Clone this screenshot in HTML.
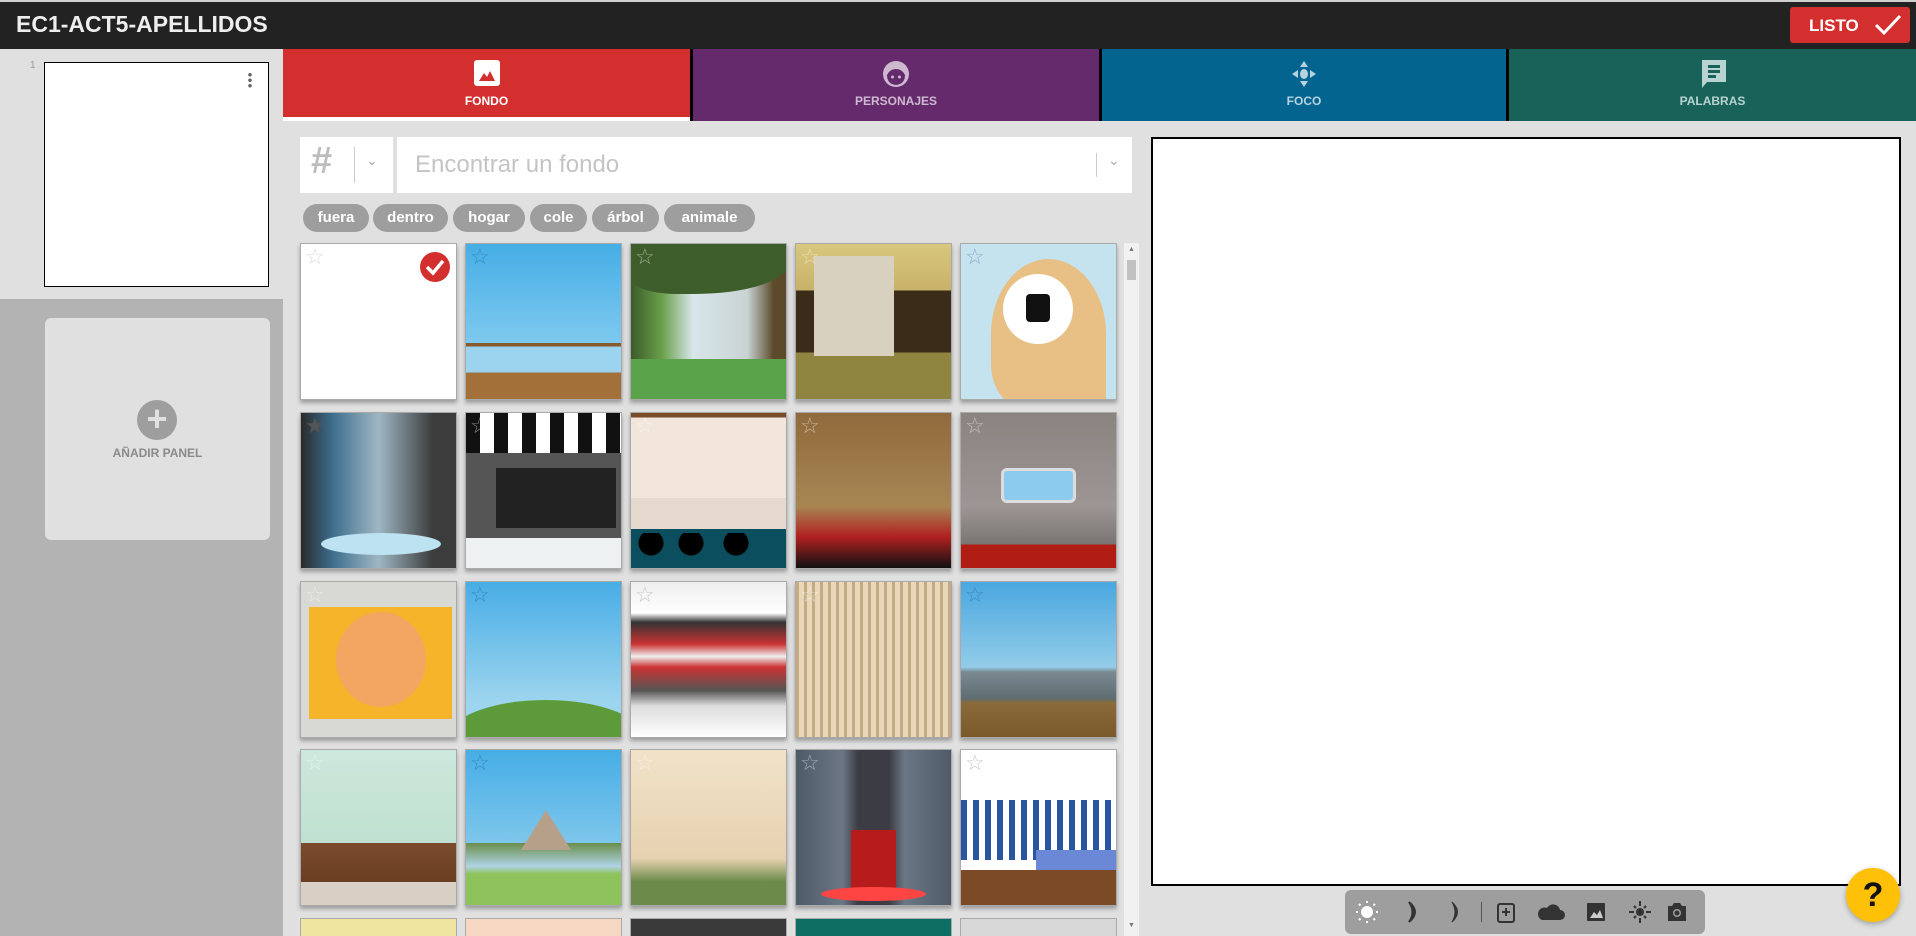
<!DOCTYPE html>
<html style="overflow:hidden;height:936px"><head><meta charset="utf-8"><style>
*{box-sizing:border-box;margin:0;padding:0}
html,body{width:1916px;height:936px;overflow:hidden}
body{background:#e0e0e0;font-family:"Liberation Sans",sans-serif}
#w{position:relative;width:1916px;height:936px;overflow:hidden}
.a{position:absolute}
.hdr{left:0;top:0;width:1916px;height:49px;background:#222;border-top:2px solid #cfcfcf}
.title{left:16px;top:11px;color:#eee;font-size:23px;font-weight:bold;letter-spacing:0}
.listo{left:1790px;top:7px;width:120px;height:36px;background:#d32f2f;border-radius:3px;color:#fff;font-weight:bold;font-size:17px;padding:9px 0 0 19px}
.tab{top:49px;height:72px;text-align:center;font-size:12px;font-weight:bold}
.tab .l{position:absolute;left:0;right:0;top:45px}
.tile{width:157px;height:157px;border:1px solid #aaa;box-shadow:0 3px 4px rgba(0,0,0,.3);overflow:hidden}
.tile .s{position:absolute;left:4px;top:0px;font-size:22px;color:rgba(255,255,255,.45);line-height:26px}
.t5{height:18px;border-bottom:none;box-shadow:none}
.chip{top:204px;height:28px;background:#9e9e9e;border-radius:14px;color:#fff;font-weight:bold;font-size:15px;text-align:center;line-height:28px}
</style></head><body><div id="w">
<div class="a hdr"></div>
<div class="a title">EC1-ACT5-APELLIDOS</div>
<div class="a listo">LISTO <svg width="28" height="22" viewBox="0 0 28 22" style="position:absolute;left:84px;top:7px"><path d="M2 11 L10 19 L26 2" stroke="#fff" stroke-width="3" fill="none"/></svg></div>

<div class="a" style="left:0;top:49px;width:283px;height:250px;background:#e0e0e0"></div>
<div class="a" style="left:0;top:299px;width:283px;height:637px;background:#b3b3b3"></div>
<div class="a" style="left:30px;top:60px;font-size:10px;color:#999">1</div>
<div class="a" style="left:44px;top:62px;width:225px;height:225px;background:#fff;border:1px solid #000"></div>
<div class="a" style="left:248px;top:72px;width:4px;height:16px;background:radial-gradient(circle,#666 1.6px,transparent 2px) 0 0/4px 5.5px"></div>
<div class="a" style="left:45px;top:318px;width:225px;height:222px;background:#e0e0e0;border-radius:6px"></div>
<div class="a" style="left:137px;top:400px;width:40px;height:40px;border-radius:50%;background:#9e9e9e;color:#e0e0e0;font-size:36px;line-height:38px;text-align:center;font-weight:bold">+</div>
<div class="a" style="left:45px;top:446px;width:225px;text-align:center;color:#8a8a8a;font-size:12px;font-weight:bold">AÑADIR PANEL</div>

<div class="a" style="left:283px;top:49px;width:1633px;height:72px;background:#000"></div>
<div class="a tab" style="left:283px;width:407px;background:#d32f2f;color:#fff">
<svg class="a" style="left:190px;top:10px" width="28" height="28" viewBox="0 0 28 28"><rect x="1" y="1" width="26" height="26" rx="3" fill="#fff"/><path d="M6 22 L11 14 L14 18 L17 12 L22 22Z" fill="#d32f2f"/></svg>
<div class="l">FONDO</div></div>
<div class="a" style="left:283px;top:117px;width:407px;height:4px;background:#fff"></div>
<div class="a tab" style="left:693px;width:406px;background:#652a6c;color:#cdb9d0">
<svg class="a" style="left:188px;top:10px" width="30" height="30" viewBox="0 0 30 30"><circle cx="15" cy="15" r="13" fill="#cdb9d0"/><path d="M6 16 Q9 10 15 10 Q21 10 24 16 Q24 25 15 26 Q6 25 6 16Z" fill="#652a6c"/><circle cx="11.5" cy="18" r="1.5" fill="#cdb9d0"/><circle cx="18.5" cy="18" r="1.5" fill="#cdb9d0"/></svg>
<div class="l">PERSONAJES</div></div>
<div class="a tab" style="left:1102px;width:404px;background:#02648f;color:#b7d3e0">
<svg class="a" style="left:188px;top:10px" width="28" height="30" viewBox="0 0 28 30"><path d="M14 2 L18 8 H10Z M14 28 L18 22 H10Z M2 15 L8 11 V19Z M26 15 L20 11 V19Z" fill="#b7d3e0"/><ellipse cx="14" cy="15" rx="4" ry="5" fill="#b7d3e0"/></svg>
<div class="l">FOCO</div></div>
<div class="a tab" style="left:1509px;width:407px;background:#18625a;color:#b9d4d0">
<svg class="a" style="left:190px;top:9px" width="30" height="32" viewBox="0 0 30 32"><path d="M3 2 H27 V24 H8 L3 30Z" fill="#b9d4d0"/><rect x="9" y="7" width="12" height="3" fill="#18625a"/><rect x="9" y="12" width="12" height="3" fill="#18625a"/><rect x="9" y="17" width="8" height="3" fill="#18625a"/></svg>
<div class="l">PALABRAS</div></div>

<div class="a" style="left:300px;top:137px;width:93px;height:56px;background:#fff"></div>
<div class="a" style="left:311px;top:140px;font-size:38px;color:#bdbdbd;font-weight:bold">#</div>
<div class="a" style="left:354px;top:147px;width:1px;height:36px;background:#ccc"></div>
<div class="a" style="left:366px;top:152px;font-size:14px;color:#aaa">⌄</div>
<div class="a" style="left:397px;top:137px;width:735px;height:56px;background:#fff"></div>
<div class="a" style="left:415px;top:151px;font-size:24px;color:#c4c4c4">Encontrar un fondo</div>
<div class="a" style="left:1096px;top:153px;width:1px;height:24px;background:#ccc"></div>
<div class="a" style="left:1108px;top:152px;font-size:14px;color:#aaa">⌄</div>

<div class="a chip" style="left:303px;width:66px">fuera</div>
<div class="a chip" style="left:373px;width:75px">dentro</div>
<div class="a chip" style="left:453px;width:72px">hogar</div>
<div class="a chip" style="left:530px;width:57px">cole</div>
<div class="a chip" style="left:592px;width:67px">árbol</div>
<div class="a chip" style="left:664px;width:91px">animale</div>

<div class="a tile" style="left:300px;top:243px;background:#fff"><span class="s" style="color:#ddd">☆</span><svg class="a" style="left:118px;top:7px" width="32" height="32"><circle cx="16" cy="16" r="15" fill="#d32f2f"/><path d="M8 16 L14 22 L24 10" stroke="#fff" stroke-width="3.5" fill="none"/></svg></div>
<div class="a tile" style="left:465px;top:243px;background:linear-gradient(#45aee6,#7ec9ef 64%,#8a5a2b 64%,#8a5a2b 66%,#9cd3ee 66%,#9cd3ee 83%,#a4703a 83%)"><span class="s" style="color:#3a8cc0">☆</span></div>
<div class="a tile" style="left:630px;top:243px;background:linear-gradient(90deg,#3b5a2a 0,#6aa04a 20%,#d7e6ea 40%,#c9d3d4 75%,#5c4a2a 92%);"><div class="a" style="left:0;top:0;width:157px;height:50px;background:#3d5e2b;border-radius:0 0 60% 30%"></div><div class="a" style="left:0;top:115px;width:157px;height:42px;background:#5aa34a"></div><span class="s">☆</span></div>
<div class="a tile" style="left:795px;top:243px;background:linear-gradient(#d9c77e,#c8b26a 30%,#3a2c18 30%,#3a2c18 70%,#8f8440 70%)"><div class="a" style="left:18px;top:12px;width:80px;height:100px;background:#d9d1bf"></div><span class="s">☆</span></div>
<div class="a tile" style="left:960px;top:243px;background:#c4e3ef"><div class="a" style="left:30px;top:15px;width:115px;height:150px;background:#e8bf85;border-radius:50% 50% 0 30%"></div><div class="a" style="left:42px;top:30px;width:70px;height:70px;background:#fff;border-radius:50%"></div><div class="a" style="left:65px;top:50px;width:24px;height:28px;background:#111;border-radius:4px"></div><span class="s" style="color:#9ac">☆</span></div>

<div class="a tile" style="left:300px;top:412px;background:linear-gradient(90deg,#2a2a2a,#3c6d8c 20%,#9fb7c4 50%,#3c3c3c 85%)"><div class="a" style="left:20px;top:120px;width:120px;height:22px;background:#bde3f2;border-radius:50%"></div><span class="s" style="color:#555">★</span></div>
<div class="a tile" style="left:465px;top:412px;background:#eee"><div class="a" style="left:0;top:0;width:157px;height:40px;background:repeating-linear-gradient(90deg,#111 0 14px,#fff 14px 28px)"></div><div class="a" style="left:0;top:40px;width:157px;height:85px;background:#555"></div><div class="a" style="left:30px;top:55px;width:120px;height:60px;background:#222"></div><div class="a" style="left:0;top:125px;width:157px;height:32px;background:#eef1f2"></div><span class="s">☆</span></div>
<div class="a tile" style="left:630px;top:412px;background:linear-gradient(#7a4b28 0,#7a4b28 3%,#f2e6dc 3%,#f2e6dc 55%,#e6d9cd 55%,#e6d9cd 75%,#0b4e5e 75%)"><div class="a" style="left:0;top:120px;width:157px;height:37px;background:radial-gradient(circle at 20px 10px,#000 12px,transparent 13px),radial-gradient(circle at 60px 10px,#000 12px,transparent 13px),radial-gradient(circle at 105px 10px,#000 12px,transparent 13px)"></div><span class="s">☆</span></div>
<div class="a tile" style="left:795px;top:412px;background:linear-gradient(#8f6a3c,#a88654 60%,#b02020 80%,#111)"><span class="s">☆</span></div>
<div class="a tile" style="left:960px;top:412px;background:linear-gradient(#8a8380,#9d9694 60%,#7a7572 85%,#b11c14 85%)"><div class="a" style="left:40px;top:55px;width:75px;height:35px;background:#8ccbee;border:3px solid #ddd;border-radius:6px"></div><span class="s">☆</span></div>

<div class="a tile" style="left:300px;top:581px;background:#d8d8d4"><div class="a" style="left:8px;top:25px;width:143px;height:112px;background:#f5b42a"></div><div class="a" style="left:35px;top:30px;width:90px;height:95px;background:#f2a661;border-radius:50%"></div><span class="s">☆</span></div>
<div class="a tile" style="left:465px;top:581px;background:linear-gradient(#48ade6,#9ed5ee 78%)"><div class="a" style="left:-20px;top:118px;width:200px;height:80px;background:#5d9a3a;border-radius:50%"></div><span class="s" style="color:#3a8cc0">☆</span></div>
<div class="a tile" style="left:630px;top:581px;background:linear-gradient(#eee,#fff 20%,#333 26%,#c33 40%,#eee 48%,#c33 55%,#555 70%,#ddd 80%,#fff)"><span class="s" style="color:#ccc">☆</span></div>
<div class="a tile" style="left:795px;top:581px;background:repeating-linear-gradient(90deg,#c4ab86 0 3px,#e8d8b8 3px 8px)"><span class="s">☆</span></div>
<div class="a tile" style="left:960px;top:581px;background:linear-gradient(#4aa7e0,#93cce9 55%,#7a8a90 58%,#5d6d72 75%,#8a6a3a 78%,#7a5a2a)"><span class="s" style="color:#3a8cc0">☆</span></div>

<div class="a tile" style="left:300px;top:749px;background:linear-gradient(#cde8dc,#bfe0d0 60%,#7a4b2c 60%,#6b3e22 85%,#d9cfc5 85%)"><span class="s">☆</span></div>
<div class="a tile" style="left:465px;top:749px;background:linear-gradient(#46aee6,#7ec6eb 60%,#6a8f4a 60%,#aed3e6 75%,#8ec25a 80%)"><div class="a" style="left:55px;top:60px;width:50px;height:40px;background:#b7a08a;clip-path:polygon(50% 0,100% 100%,0 100%)"></div><span class="s" style="color:#3a8cc0">☆</span></div>
<div class="a tile" style="left:630px;top:749px;background:linear-gradient(#f1e2c8,#e6d2b0 70%,#6c8a4a 85%)"><span class="s">☆</span></div>
<div class="a tile" style="left:795px;top:749px;background:linear-gradient(90deg,#4e5a68 0,#6b7785 30%,#3c3c44 40%,#3c3c44 60%,#6b7785 70%,#4e5a68)"><div class="a" style="left:55px;top:80px;width:45px;height:60px;background:#b71c1c"></div><div class="a" style="left:25px;top:137px;width:105px;height:14px;background:#f44;border-radius:50%"></div><span class="s">☆</span></div>
<div class="a tile" style="left:960px;top:749px;background:#fff"><div class="a" style="left:0;top:50px;width:157px;height:60px;background:repeating-linear-gradient(90deg,#2a55a0 0 6px,#fff 6px 12px)"></div><div class="a" style="left:75px;top:100px;width:82px;height:25px;background:#6b88d6"></div><div class="a" style="left:0;top:120px;width:157px;height:37px;background:#7b4a26"></div><span class="s" style="color:#ccc">☆</span></div>

<div class="a tile t5" style="left:300px;top:918px;background:#efe4a0"></div>
<div class="a tile t5" style="left:465px;top:918px;background:#f6d8c2"></div>
<div class="a tile t5" style="left:630px;top:918px;background:#3a3a3a"></div>
<div class="a tile t5" style="left:795px;top:918px;background:#0f6e63"></div>
<div class="a tile t5" style="left:960px;top:918px;background:#d8d8d8"></div>

<div class="a" style="left:1124px;top:243px;width:15px;height:693px;background:#f1f1f1"></div>
<div class="a" style="left:1127px;top:260px;width:9px;height:20px;background:#c1c1c1"></div>
<div class="a" style="left:1128px;top:246px;font-size:7px;color:#777">▲</div>
<div class="a" style="left:1128px;top:922px;font-size:7px;color:#777">▼</div>

<div class="a" style="left:1151px;top:137px;width:750px;height:749px;background:#fff;border:2px solid #000"></div>

<div class="a" style="left:1345px;top:890px;width:360px;height:44px;background:#9e9e9e;border-radius:6px"></div>
<svg class="a" style="left:1345px;top:890px" width="360" height="44" viewBox="0 0 360 44">
<g transform="translate(22,22)" fill="#fff"><circle r="6"/><g stroke="#fff" stroke-width="2"><path d="M0 -11V-9M0 9V11M-11 0H-9M9 0H11M-8 -8L-6.5 -6.5M8 8L6.5 6.5M-8 8L-6.5 6.5M8 -8L6.5 -6.5"/></g></g>
<path d="M64 12 Q76 22 64 32 Q71 22 64 12Z" fill="#333" stroke="#333" stroke-width="2"/>
<path d="M107 12 Q118 22 107 32 Q113 22 107 12Z" fill="#333" stroke="#333" stroke-width="1"/>
<rect x="136" y="12" width="1" height="20" fill="#555"/>
<rect x="153" y="14" width="16" height="18" rx="2" fill="none" stroke="#333" stroke-width="2"/><path d="M161 18v8M157 22h8" stroke="#333" stroke-width="2"/>
<path d="M197 30 H215 A5 5 0 0 0 215 20 A7 7 0 0 0 202 18 A6 6 0 0 0 197 30Z" fill="#333"/>
<rect x="242" y="13" width="18" height="18" rx="1" fill="#333"/><path d="M245 28 L249 22 L252 25 L255 20 L258 28Z" fill="#ccc"/>
<g transform="translate(295,22)" stroke="#333" stroke-width="2"><circle r="3" fill="#333"/><path d="M0 -11V-6M0 6V11M-11 0H-6M6 0H11M-6 -6L-4 -4M6 6L4 4M-6 6L-4 4M6 -6L4 -4"/></g>
<path d="M323 16 H327 L329 13 H335 L337 16 H341 V31 H323Z" fill="#333"/><circle cx="332" cy="23" r="4" fill="#9e9e9e"/><circle cx="332" cy="23" r="2.5" fill="#333"/>
</svg>

<div class="a" style="left:1846px;top:868px;width:54px;height:54px;border-radius:50%;background:#ffc107;box-shadow:0 2px 6px rgba(0,0,0,.3);text-align:center;font-size:34px;font-weight:bold;line-height:54px;color:#111">?</div>
</div></body></html>
